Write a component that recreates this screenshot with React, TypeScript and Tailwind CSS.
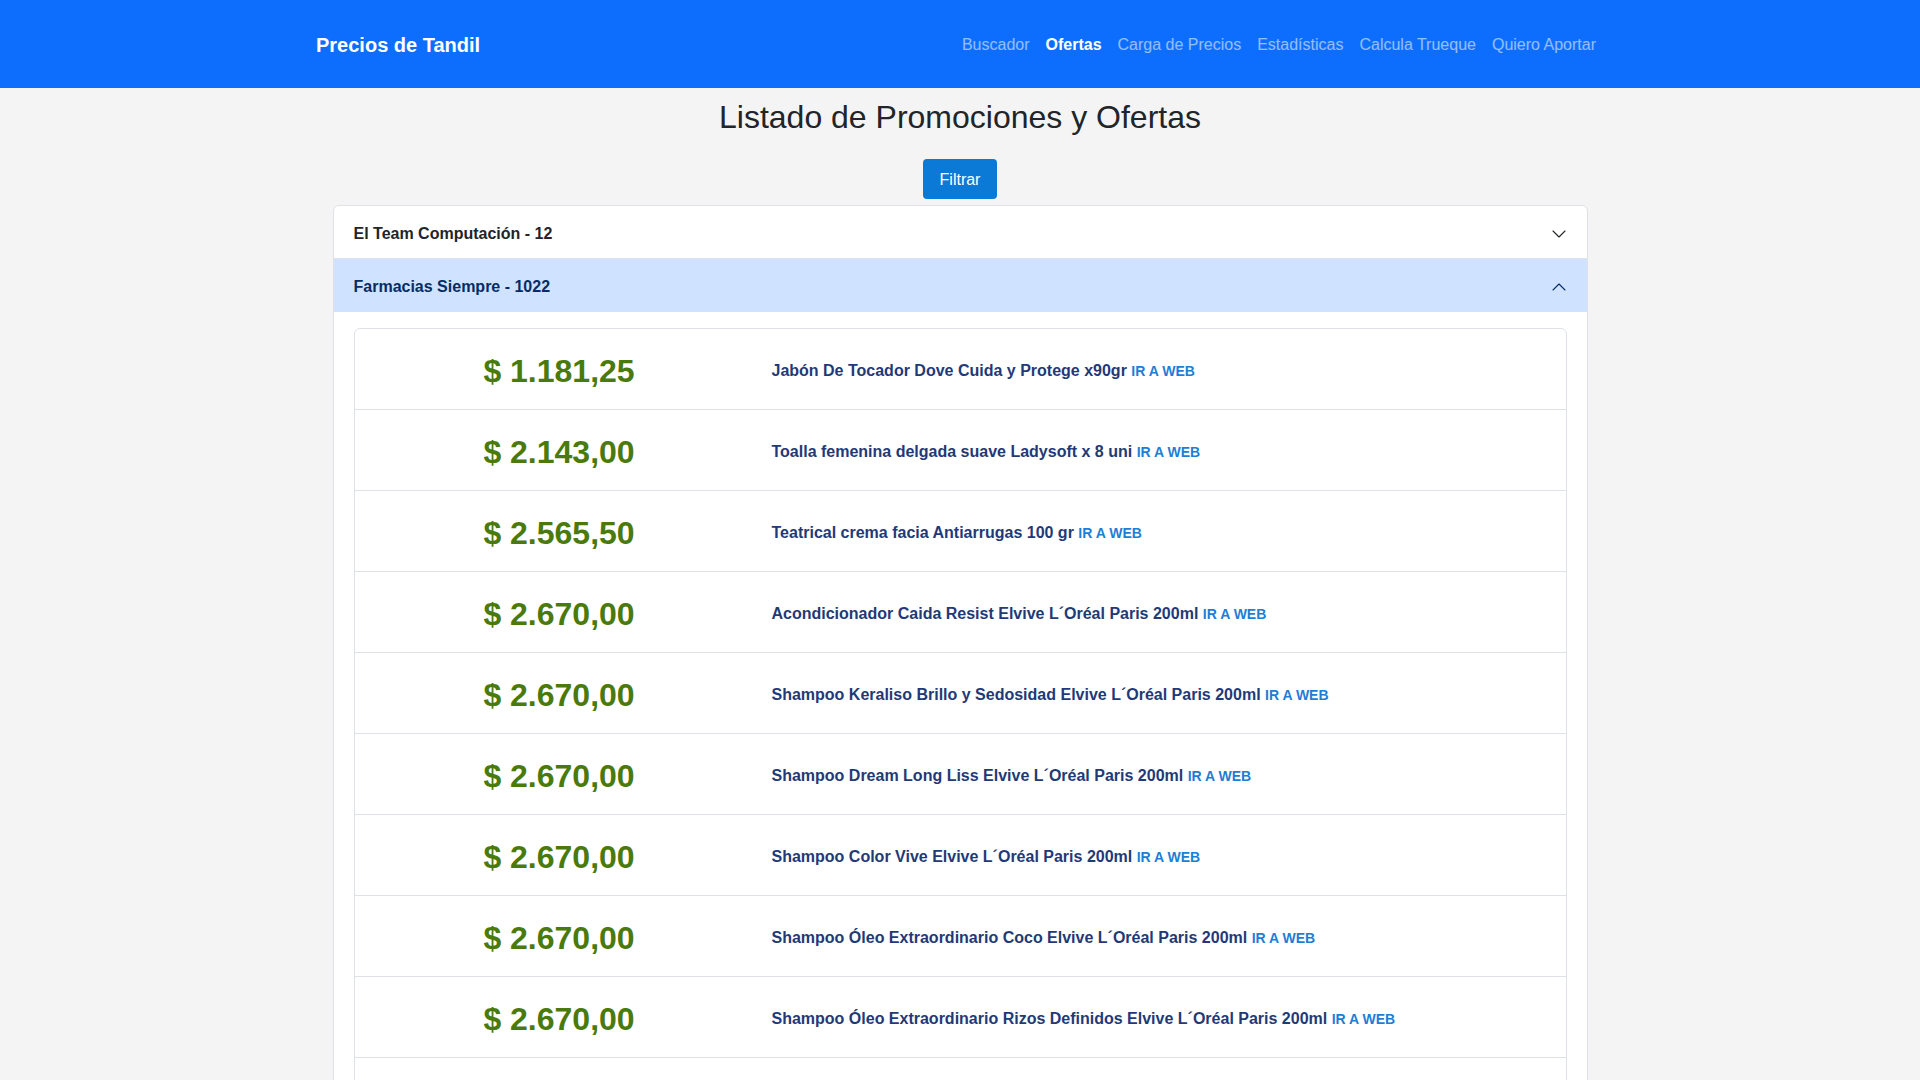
import React from "react";

type Offer = {
	price: string;
	name: string;
};

const offers: Offer[] = [
	{ price: "$ 1.181,25", name: "Jabón De Tocador Dove Cuida y Protege x90gr" },
	{ price: "$ 2.143,00", name: "Toalla femenina delgada suave Ladysoft x 8 uni" },
	{ price: "$ 2.565,50", name: "Teatrical crema facia Antiarrugas 100 gr" },
	{ price: "$ 2.670,00", name: "Acondicionador Caida Resist Elvive L´Oréal Paris 200ml" },
	{ price: "$ 2.670,00", name: "Shampoo Keraliso Brillo y Sedosidad Elvive L´Oréal Paris 200ml" },
	{ price: "$ 2.670,00", name: "Shampoo Dream Long Liss Elvive L´Oréal Paris 200ml" },
	{ price: "$ 2.670,00", name: "Shampoo Color Vive Elvive L´Oréal Paris 200ml" },
	{ price: "$ 2.670,00", name: "Shampoo Óleo Extraordinario Coco Elvive L´Oréal Paris 200ml" },
	{ price: "$ 2.670,00", name: "Shampoo Óleo Extraordinario Rizos Definidos Elvive L´Oréal Paris 200ml" },
	{ price: "$ 2.670,00", name: "Acondicionador Óleo Extraordinario Elvive L´Oréal Paris 200ml" },
	{ price: "$ 2.790,00", name: "Crema de peinar Elvive Hidra Hialurónico 300ml" },
];

const links = ["Buscador", "Ofertas", "Carga de Precios", "Estadísticas", "Calcula Trueque", "Quiero Aportar"];

function Chevron({ up, color }: { up?: boolean; color: string }) {
	return (
		<svg
			width="16"
			height="16"
			viewBox="0 0 16 16"
			fill="none"
			className={up ? "rotate-180" : ""}
		>
			<path
				d="M2 5L8 11L14 5"
				stroke={color}
				strokeWidth="1.1"
				strokeLinecap="round"
				strokeLinejoin="round"
			/>
		</svg>
	);
}

export default function App() {
	return (
		<div className="h-screen overflow-hidden bg-[#f3f4f3] font-['Liberation_Sans',Arial,sans-serif] text-[#212529]">
			<nav className="h-[88px] bg-[#0d6efd]">
				<div className="mx-auto flex h-full w-[1288px] items-center justify-between pt-[2px]">
					<span className="text-[20px] font-bold text-white">Precios de Tandil</span>
					<div className="flex">
						{links.map((l) => (
							<a
								key={l}
								className={
									l === "Ofertas"
										? "px-2 text-[16px] font-bold text-white"
										: "px-2 text-[16px] text-white/55"
								}
							>
								{l}
							</a>
						))}
					</div>
				</div>
			</nav>

			<h2 className="pt-[10px] text-center text-[32px] leading-[38px] text-[#212529]">
				Listado de Promociones y Ofertas
			</h2>

			<div className="mt-[23px] flex justify-center">
				<button className="h-[40px] w-[74px] rounded-[4px] bg-[#0b79d6] pt-[1px] text-[16px] text-white">
					Filtrar
				</button>
			</div>

			<div className="mx-auto mt-[6px] w-[1255px] overflow-hidden rounded-[6px] border border-[#dee2e6] bg-white">
				<div className="flex h-[53px] items-center justify-between border-b border-[#dee2e6] px-[20px] pt-[4px]">
					<span className="text-[16px] font-bold text-[#212529]">El Team Computación - 12</span>
					<Chevron color="#212529" />
				</div>
				<div className="flex h-[53px] items-center justify-between bg-[#cfe2ff] px-[20px] pt-[3px]">
					<span className="text-[16px] font-bold text-[#052c65]">Farmacias Siempre - 1022</span>
					<Chevron up color="#052c65" />
				</div>
				<div className="px-[20px] pt-[16px]">
					<div className="divide-y divide-[#dee2e6] rounded-[6px] border border-[#dee2e6]">
						{offers.map((o, i) => (
							<div key={i} className="grid h-[81px] grid-cols-[401px_1fr] items-center px-[4px] pt-[3px]">
								<div className="text-center text-[32px] font-bold leading-[36px] text-[#4a7a0b]">{o.price}</div>
								<div className="pl-[12px] text-[16px] font-bold text-[#1f3a77]">
									{o.name}{" "}
									<a className="text-[14px] font-bold text-[#1c7ed6]">IR A WEB</a>
								</div>
							</div>
						))}
					</div>
				</div>
			</div>
		</div>
	);
}
